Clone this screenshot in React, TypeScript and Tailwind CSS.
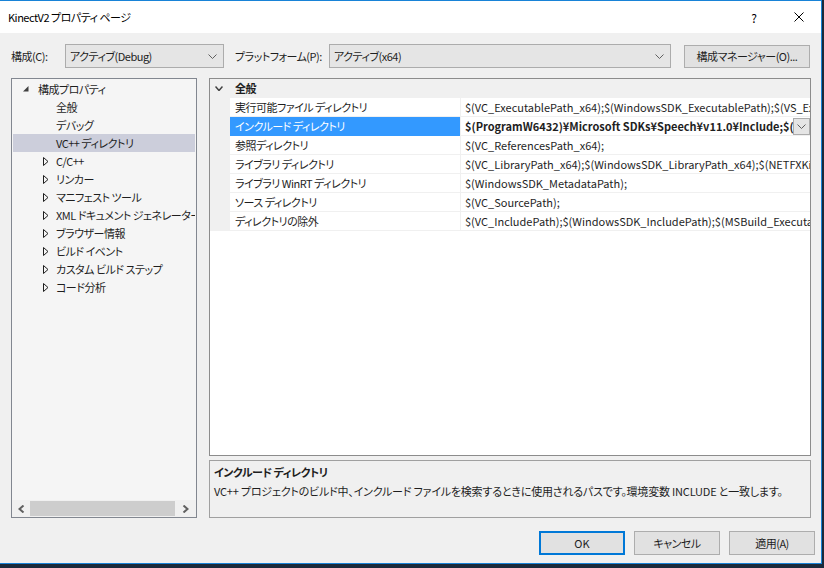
import React from "react";

const F = "font-['Noto_Sans_CJK_JP',sans-serif] [font-feature-settings:'palt']";
const JP = "tracking-[-0.5px]";

const ChevronDown = ({ w = 9, h = 5, color = "#606060", sw = 1 }: { w?: number; h?: number; color?: string; sw?: number }) => (
  <svg width={w} height={h} viewBox={`0 0 ${w} ${h}`}>
    <path d={`M0.5 0.5 L${w / 2} ${h - 0.5} L${w - 0.5} 0.5`} fill="none" stroke={color} strokeWidth={sw} />
  </svg>
);

type TreeItem = { label: string; kind: "root" | "leaf" | "closed"; selected?: boolean };

const tree: TreeItem[] = [
  { label: "構成プロパティ", kind: "root" },
  { label: "全般", kind: "leaf" },
  { label: "デバッグ", kind: "leaf" },
  { label: "VC++ ディレクトリ", kind: "leaf", selected: true },
  { label: "C/C++", kind: "closed" },
  { label: "リンカー", kind: "closed" },
  { label: "マニフェスト ツール", kind: "closed" },
  { label: "XML ドキュメント ジェネレーター", kind: "closed" },
  { label: "ブラウザー情報", kind: "closed" },
  { label: "ビルド イベント", kind: "closed" },
  { label: "カスタム ビルド ステップ", kind: "closed" },
  { label: "コード分析", kind: "closed" },
];

const props = [
  { name: "実行可能ファイル ディレクトリ", value: "$(VC_ExecutablePath_x64);$(WindowsSDK_ExecutablePath);$(VS_ExecutablePath);$(MSBuild_ExecutablePath)" },
  { name: "インクルード ディレクトリ", value: "$(ProgramW6432)¥Microsoft SDKs¥Speech¥v11.0¥Include;$(KINECTSDK20_DIR)", selected: true },
  { name: "参照ディレクトリ", value: "$(VC_ReferencesPath_x64);" },
  { name: "ライブラリ ディレクトリ", value: "$(VC_LibraryPath_x64);$(WindowsSDK_LibraryPath_x64);$(NETFXKitsDir)Lib¥um¥x64" },
  { name: "ライブラリ WinRT ディレクトリ", value: "$(WindowsSDK_MetadataPath);" },
  { name: "ソース ディレクトリ", value: "$(VC_SourcePath);" },
  { name: "ディレクトリの除外", value: "$(VC_IncludePath);$(WindowsSDK_IncludePath);$(MSBuild_ExecutablePath);$(VC_LibraryPath_x64)" },
];

function TreeRow({ item }: { item: TreeItem }) {
  const pad = item.kind === "root" ? "pl-[10px]" : item.kind === "closed" ? "pl-[30px]" : "pl-[43px]";
  return (
    <div className={`h-[18px] mx-[1px] flex items-center whitespace-nowrap overflow-hidden ${pad} ${item.selected ? "bg-[#cccedb]" : ""}`}>
      {item.kind === "root" && (
        <span className="w-[15px] shrink-0 flex items-center">
          <svg width="6" height="6" viewBox="0 0 6 6">
            <polygon points="5.5,0 5.5,5.5 0,5.5" fill="#404040" />
          </svg>
        </span>
      )}
      {item.kind === "closed" && (
        <span className="w-[13px] shrink-0 flex items-center">
          <svg width="6" height="9" viewBox="0 0 6 9">
            <polygon points="0.5,0.5 5,4.5 0.5,8.5" fill="none" stroke="#1e1e1e" strokeWidth="1" />
          </svg>
        </span>
      )}
      <span className={`text-[11px] leading-[15px] text-[#1e1e1e] ${JP}`}>{item.label}</span>
    </div>
  );
}

export default function App() {
  return (
    <div className={`w-[824px] h-[568px] bg-[#1a2a3b] overflow-hidden ${F}`}>
      <div className="w-[822px] h-[564px] border-t border-r border-b border-[#1883d7] bg-[#f0f0f0] flex flex-col">
        {/* title bar */}
        <div className="h-[32px] bg-white flex items-center justify-between pl-[8px] pr-[17px]">
          <span className={`text-[11px] leading-[15px] text-black ${JP}`}>KinectV2 プロパティ ページ</span>
          <div className="flex items-center gap-[37px]">
            <span className="text-[12px] leading-[15px] text-black">?</span>
            <svg width="10" height="10" viewBox="0 0 10 10">
              <path d="M0.5 0.5 L9.5 9.5 M9.5 0.5 L0.5 9.5" stroke="#000" strokeWidth="1" />
            </svg>
          </div>
        </div>

        {/* body */}
        <div className="flex-1 flex flex-col px-[11px] pt-[11px]">
          {/* config row */}
          <div className="h-[24px] flex items-center text-[11px] text-[#1e1e1e] whitespace-nowrap">
            <span className={`w-[54px] leading-[15px] ${JP}`}>構成(C):</span>
            <div className="w-[159px] h-[24px] border border-[#acacac] bg-[#e5e5e5] flex items-center justify-between pl-[4px] pr-[6px]">
              <span className={`leading-[15px] ${JP}`}>アクティブ(Debug)</span>
              <ChevronDown w={9} h={5} />
            </div>
            <span className={`ml-[11px] w-[94px] leading-[15px] ${JP}`}>プラットフォーム(P):</span>
            <div className="w-[342px] h-[24px] border border-[#acacac] bg-[#e5e5e5] flex items-center justify-between pl-[4px] pr-[6px]">
              <span className={`leading-[15px] ${JP}`}>アクティブ(x64)</span>
              <ChevronDown w={9} h={5} />
            </div>
            <div className="ml-[13px] w-[126px] h-[23px] border border-[#adadad] bg-[#e1e1e1] flex items-center justify-center">
              <span className={`leading-[15px] ${JP}`}>構成マネージャー(O)...</span>
            </div>
          </div>

          {/* main */}
          <div className="mt-[10px] h-[440px] flex gap-[12px]">
            {/* tree */}
            <div className="w-[186px] border border-[#828790] bg-[#f5f5f5] flex flex-col">
              <div className="flex-1 pt-[1px] overflow-hidden">
                {tree.map((t) => (
                  <TreeRow key={t.label} item={t} />
                ))}
              </div>
              <div className="h-[17px] flex items-center bg-[#f0f0f0]">
                <span className="w-[18px] flex justify-center">
                  <svg width="7" height="8" viewBox="0 0 7 8">
                    <path d="M5.5 0.5 L1.5 4 L5.5 7.5" fill="none" stroke="#606060" strokeWidth="2" />
                  </svg>
                </span>
                <div className="w-[145px] h-[15px] bg-[#cdcdcd]" />
                <span className="flex-1 flex justify-center">
                  <svg width="7" height="8" viewBox="0 0 7 8">
                    <path d="M1.5 0.5 L5.5 4 L1.5 7.5" fill="none" stroke="#606060" strokeWidth="2" />
                  </svg>
                </span>
              </div>
            </div>

            {/* right side */}
            <div className="w-[602px] flex flex-col gap-[4px]">
              <div className="h-[378px] border border-[#8c8c8c] bg-white flex flex-col overflow-hidden">
                <div className="h-[19px] bg-[#f0f0f0] flex items-center pl-[5px]">
                  <span className="w-[20px] flex items-center">
                    <ChevronDown w={8} h={5} color="#404040" sw={1.5} />
                  </span>
                  <span className={`text-[11px] leading-[15px] font-bold text-[#1e1e1e] ${JP}`}>全般</span>
                </div>
                {props.map((p) => (
                  <div key={p.name} className="h-[19px] flex text-[11px] text-[#1e1e1e]">
                    <div className="w-[20px] bg-[#f0f0f0]" />
                    <div
                      className={`w-[230px] pl-[5px] flex items-center whitespace-nowrap overflow-hidden border-b ${
                        p.selected ? "bg-[#3399ff] text-white border-[#3399ff]" : "border-[#f0f0f0]"
                      }`}
                    >
                      <span className={`leading-[15px] ${JP}`}>{p.name}</span>
                    </div>
                    <div className="flex-1 min-w-0 border-l border-b border-[#f0f0f0] pl-[4px] flex items-center">
                      <span className={`flex-1 min-w-0 overflow-hidden whitespace-nowrap leading-[16px] ${p.selected ? "font-bold" : ""}`}>
                        {p.value}
                      </span>
                      {p.selected && (
                        <div className="w-[17px] h-[17px] shrink-0 border border-[#acacac] bg-[#e5e5e5] flex items-center justify-center">
                          <ChevronDown w={9} h={5} />
                        </div>
                      )}
                    </div>
                  </div>
                ))}
              </div>
              <div className="h-[58px] border border-[#a0a0a0] bg-[#f0f0f0] pl-[4px] pt-[2px] text-[11px] text-[#1e1e1e] whitespace-nowrap">
                <div className={`h-[18px] flex items-center font-bold leading-[15px] ${JP}`}>インクルード ディレクトリ</div>
                <div className="h-[20px] flex items-center leading-[15px] tracking-[-0.2px]">
                  VC++ プロジェクトのビルド中、インクルード ファイルを検索するときに使用されるパスです。環境変数 INCLUDE と一致します。
                </div>
              </div>
            </div>
          </div>

          {/* buttons */}
          <div className="mt-[13px] flex justify-end gap-[9px] -mr-[5px] text-[11px] text-[#1e1e1e]">
            <div className="w-[86px] h-[24px] border-2 border-[#0078d7] bg-[#e1e1e1] flex items-center justify-center leading-[15px]">OK</div>
            <div className={`w-[86px] h-[24px] border border-[#adadad] bg-[#e1e1e1] flex items-center justify-center leading-[15px] ${JP}`}>キャンセル</div>
            <div className={`w-[86px] h-[24px] border border-[#adadad] bg-[#e1e1e1] flex items-center justify-center leading-[15px] ${JP}`}>適用(A)</div>
          </div>
        </div>
      </div>
    </div>
  );
}
